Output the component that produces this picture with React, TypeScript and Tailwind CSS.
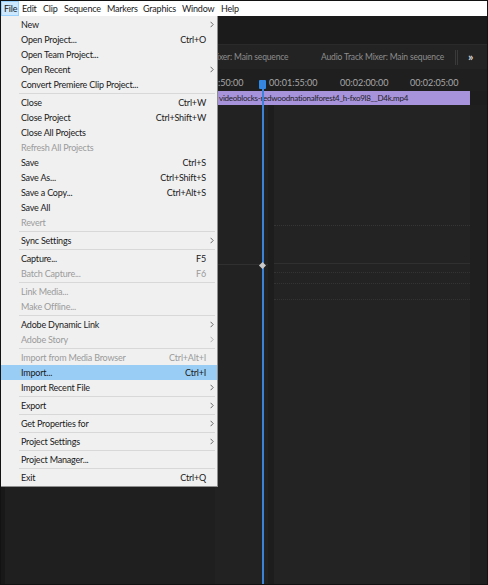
import React from "react";

type Row =
  | { sep: true }
  | { sep?: false; label: string; shortcut?: string; arrow?: boolean; disabled?: boolean; active?: boolean };

const rows: Row[] = [
  { label: "New", arrow: true },
  { label: "Open Project...", shortcut: "Ctrl+O" },
  { label: "Open Team Project..." },
  { label: "Open Recent", arrow: true },
  { label: "Convert Premiere Clip Project..." },
  { sep: true },
  { label: "Close", shortcut: "Ctrl+W" },
  { label: "Close Project", shortcut: "Ctrl+Shift+W" },
  { label: "Close All Projects" },
  { label: "Refresh All Projects", disabled: true },
  { label: "Save", shortcut: "Ctrl+S" },
  { label: "Save As...", shortcut: "Ctrl+Shift+S" },
  { label: "Save a Copy...", shortcut: "Ctrl+Alt+S" },
  { label: "Save All" },
  { label: "Revert", disabled: true },
  { sep: true },
  { label: "Sync Settings", arrow: true },
  { sep: true },
  { label: "Capture...", shortcut: "F5" },
  { label: "Batch Capture...", shortcut: "F6", disabled: true },
  { sep: true },
  { label: "Link Media...", disabled: true },
  { label: "Make Offline...", disabled: true },
  { sep: true },
  { label: "Adobe Dynamic Link", arrow: true },
  { label: "Adobe Story", arrow: true, disabled: true },
  { sep: true },
  { label: "Import from Media Browser", shortcut: "Ctrl+Alt+I", disabled: true },
  { label: "Import...", shortcut: "Ctrl+I", active: true },
  { label: "Import Recent File", arrow: true },
  { sep: true },
  { label: "Export", arrow: true },
  { sep: true },
  { label: "Get Properties for", arrow: true },
  { sep: true },
  { label: "Project Settings", arrow: true },
  { sep: true },
  { label: "Project Manager..." },
  { sep: true },
  { label: "Exit", shortcut: "Ctrl+Q" },
];

function Chevron({ disabled }: { disabled?: boolean }) {
  return (
    <svg width="4" height="7" viewBox="0 0 4 7" className="block">
      <path d="M0.6 0.8 L3.2 3.5 L0.6 6.2" fill="none" stroke={disabled ? "#a8a8a8" : "#5a5a5a"} strokeWidth="0.9" />
    </svg>
  );
}

export default function App() {
  return (
    <div
      className="relative w-[488px] h-[585px] overflow-hidden border border-[#121212] bg-[#1e1e1e] flex flex-col"
      style={{ fontFamily: 'Lato, "Noto Sans", sans-serif' }}
    >
      {/* Menu bar */}
      <div className="h-[15px] shrink-0 bg-white flex items-stretch text-[9px] tracking-[-0.2px] leading-none text-[#1a1a1a] whitespace-nowrap">
        <div className="w-[18px] shrink-0 flex items-center pl-[2px] bg-[#cce8ff] border border-[#99d1ff]">File</div>
        <div className="ml-[3px] w-[21px] shrink-0 flex items-center">Edit</div>
        <div className="w-[21px] shrink-0 flex items-center">Clip</div>
        <div className="w-[43px] shrink-0 flex items-center">Sequence</div>
        <div className="w-[36px] shrink-0 flex items-center">Markers</div>
        <div className="w-[39px] shrink-0 flex items-center">Graphics</div>
        <div className="w-[39px] shrink-0 flex items-center">Window</div>
        <div className="shrink-0 flex items-center">Help</div>
      </div>

      {/* App body */}
      <div className="flex-1 flex min-h-0">
        {/* Left column (mostly under menu) */}
        <div className="w-[214px] shrink-0 bg-[#1f1f1f] border-l-4 border-[#181818]" />

        {/* Timeline column */}
        <div className="relative flex-1 flex flex-col bg-[#222222] overflow-hidden">
          <div className="h-[29px] shrink-0 bg-[#1b1b1b] border-b border-[#2a2a2a]" />
          <div className="h-[24px] shrink-0 bg-[#232323] flex items-center text-[8.5px] tracking-[-0.15px] text-[#8e8e8e] whitespace-nowrap">
            <span className="ml-[2px] w-[104px] shrink-0">ixer: Main sequence</span>
            <span className="w-[134px] shrink-0">Audio Track Mixer: Main sequence</span>
            <div className="h-[15px] w-[3px] shrink-0 border-l border-r border-[#3a3a3a]" />
            <span className="ml-[10px] text-[#d4d4d4] font-bold text-[12px] leading-none">»</span>
          </div>
          <div className="h-[6px] shrink-0 bg-[#1f1f1f]" />
          {/* Ruler */}
          <div className="h-[16px] shrink-0 bg-[#1f1f1f] flex items-center text-[9px] text-[#a8a8a8] whitespace-nowrap">
            <span className="ml-[3px] w-[51px] shrink-0">:50:00</span>
            <span className="w-[71px] shrink-0">00:01:55:00</span>
            <span className="w-[70px] shrink-0">00:02:00:00</span>
            <span>00:02:05:00</span>
          </div>
          {/* Clip row */}
          <div className="h-[14px] shrink-0 flex bg-[#1d1d1d]">
            <div className="ml-[2px] w-[253px] bg-[#a792dc] flex items-center text-[8px] tracking-[-0.25px] text-[#1e1e1e] pl-[2px] whitespace-nowrap overflow-hidden">
              videoblocks-redwoodnationalforest4_h-fxo9l8__D4k.mp4
            </div>
          </div>
          {/* Tracks */}
          <div className="flex-1 flex min-h-0">
            <div className="w-[53px] shrink-0 bg-[#222222] flex flex-col">
              <div className="h-[160px] border-b border-[#303030]" />
            </div>
            <div className="w-[202px] shrink-0 bg-[#232323] border-l-[6px] border-[#1d1d1d] flex flex-col">
              <div className="h-[121px] border-b border-dotted border-[#363636]" />
              <div className="h-[38px] border-b border-[#303030]" />
              <div className="h-[9px] border-b border-dotted border-[#343434]" />
              <div className="h-[11px] border-b border-dotted border-[#343434]" />
              <div className="h-[16px] border-b border-dotted border-[#333333]" />
            </div>
            <div className="flex-1 bg-[#1f1f1f]" />
          </div>

          {/* Playhead */}
          <div className="absolute left-[44px] top-[64px] w-[7px] h-[9px] bg-[#2e8ae6] rounded-[1px]" />
          <div className="absolute left-[47px] top-[64px] bottom-0 w-[1.5px] bg-[#3b82d9]" />
          <div className="absolute left-[45px] top-[247px] w-[5px] h-[5px] rotate-45 bg-[#c9c9c9]" />
        </div>
      </div>

      {/* File dropdown menu */}
      <div className="absolute left-0 top-[15px] w-[217px] bg-[#f0f0f0] border-r border-b border-[#8f8f8f] py-[1px] text-[9px] tracking-[-0.2px] leading-none">
        {rows.map((r, i) =>
          r.sep ? (
            <div key={i} className="h-[3px] flex items-center">
              <div className="ml-[18px] mr-[2px] flex-1 h-px bg-[#d8d8d8]" />
            </div>
          ) : (
            <div
              key={i}
              className={
                "h-[15px] flex items-center pl-[20px] " +
                (r.active ? "bg-[#99cdf5] " : "") +
                (r.disabled ? "text-[#9b9b9b]" : "text-[#1a1a1a]")
              }
            >
              <span className="flex-1 whitespace-nowrap">{r.label}</span>
              {r.shortcut && <span className="whitespace-nowrap">{r.shortcut}</span>}
              <span className="w-[11px] flex justify-center">{r.arrow && <Chevron disabled={r.disabled} />}</span>
            </div>
          )
        )}
      </div>
    </div>
  );
}
